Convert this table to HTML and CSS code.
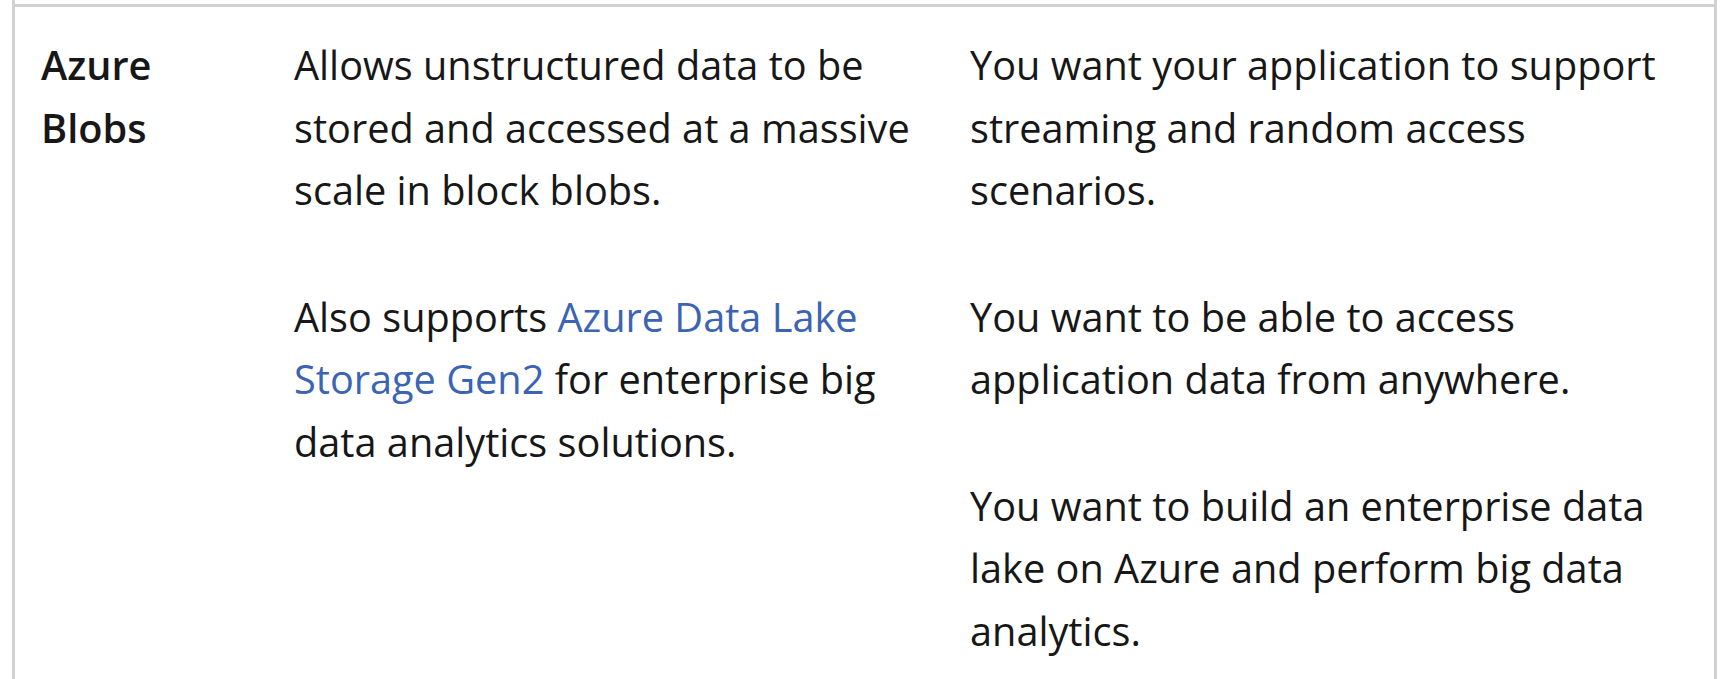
FILE: index.html
```html
<!DOCTYPE html>
<html lang="en">
<head>
<meta charset="utf-8">
<title>Azure Blobs</title>
<link rel="stylesheet" href="styles.css">
</head>
<body>
<div class="table">
  <div class="row">
    <div class="cell name">Azure<br>Blobs</div>
    <div class="cell">
      <p>Allows unstructured data to be stored and accessed at a massive scale in block blobs.</p>
      <p>Also supports <a href="#">Azure Data Lake Storage Gen2</a> for enterprise big data analytics solutions.</p>
    </div>
    <div class="cell last">
      <p>You want your application to support streaming and random access scenarios.</p>
      <p>You want to be able to access application data from anywhere.</p>
      <p>You want to build an enterprise data lake on Azure and perform big data analytics.</p>
    </div>
  </div>
</div>
</body>
</html>
```

FILE: styles.css
```css
html, body {
  margin: 0;
  padding: 0;
  background: #ffffff;
}
body {
  font-family: "Open Sans", "Noto Sans", sans-serif;
  font-size: 39.7px;
  line-height: 62.5px;
  color: #171717;
  height: 679px;
  overflow: hidden;
}
.table {
  box-sizing: border-box;
  margin-left: 12px;
  width: 1705px;
  height: 679px;
  border-left: 3px solid #d1d1d1;
  border-right: 3px solid #d1d1d1;
  padding-top: 4px;
  overflow: hidden;
}
.row {
  display: grid;
  grid-template-columns: 253px 676px 1fr;
  border-top: 3px solid #d1d1d1;
}
.cell {
  padding: 27px 26px 0 26px;
}
.last {
  padding-right: 35px;
}
.last p:last-child {
  margin-bottom: 0;
}
.name {
  font-weight: 600;
}
p {
  margin: 0 0 64px 0;
}
a {
  color: #3b64b4;
  text-decoration: none;
}
```
